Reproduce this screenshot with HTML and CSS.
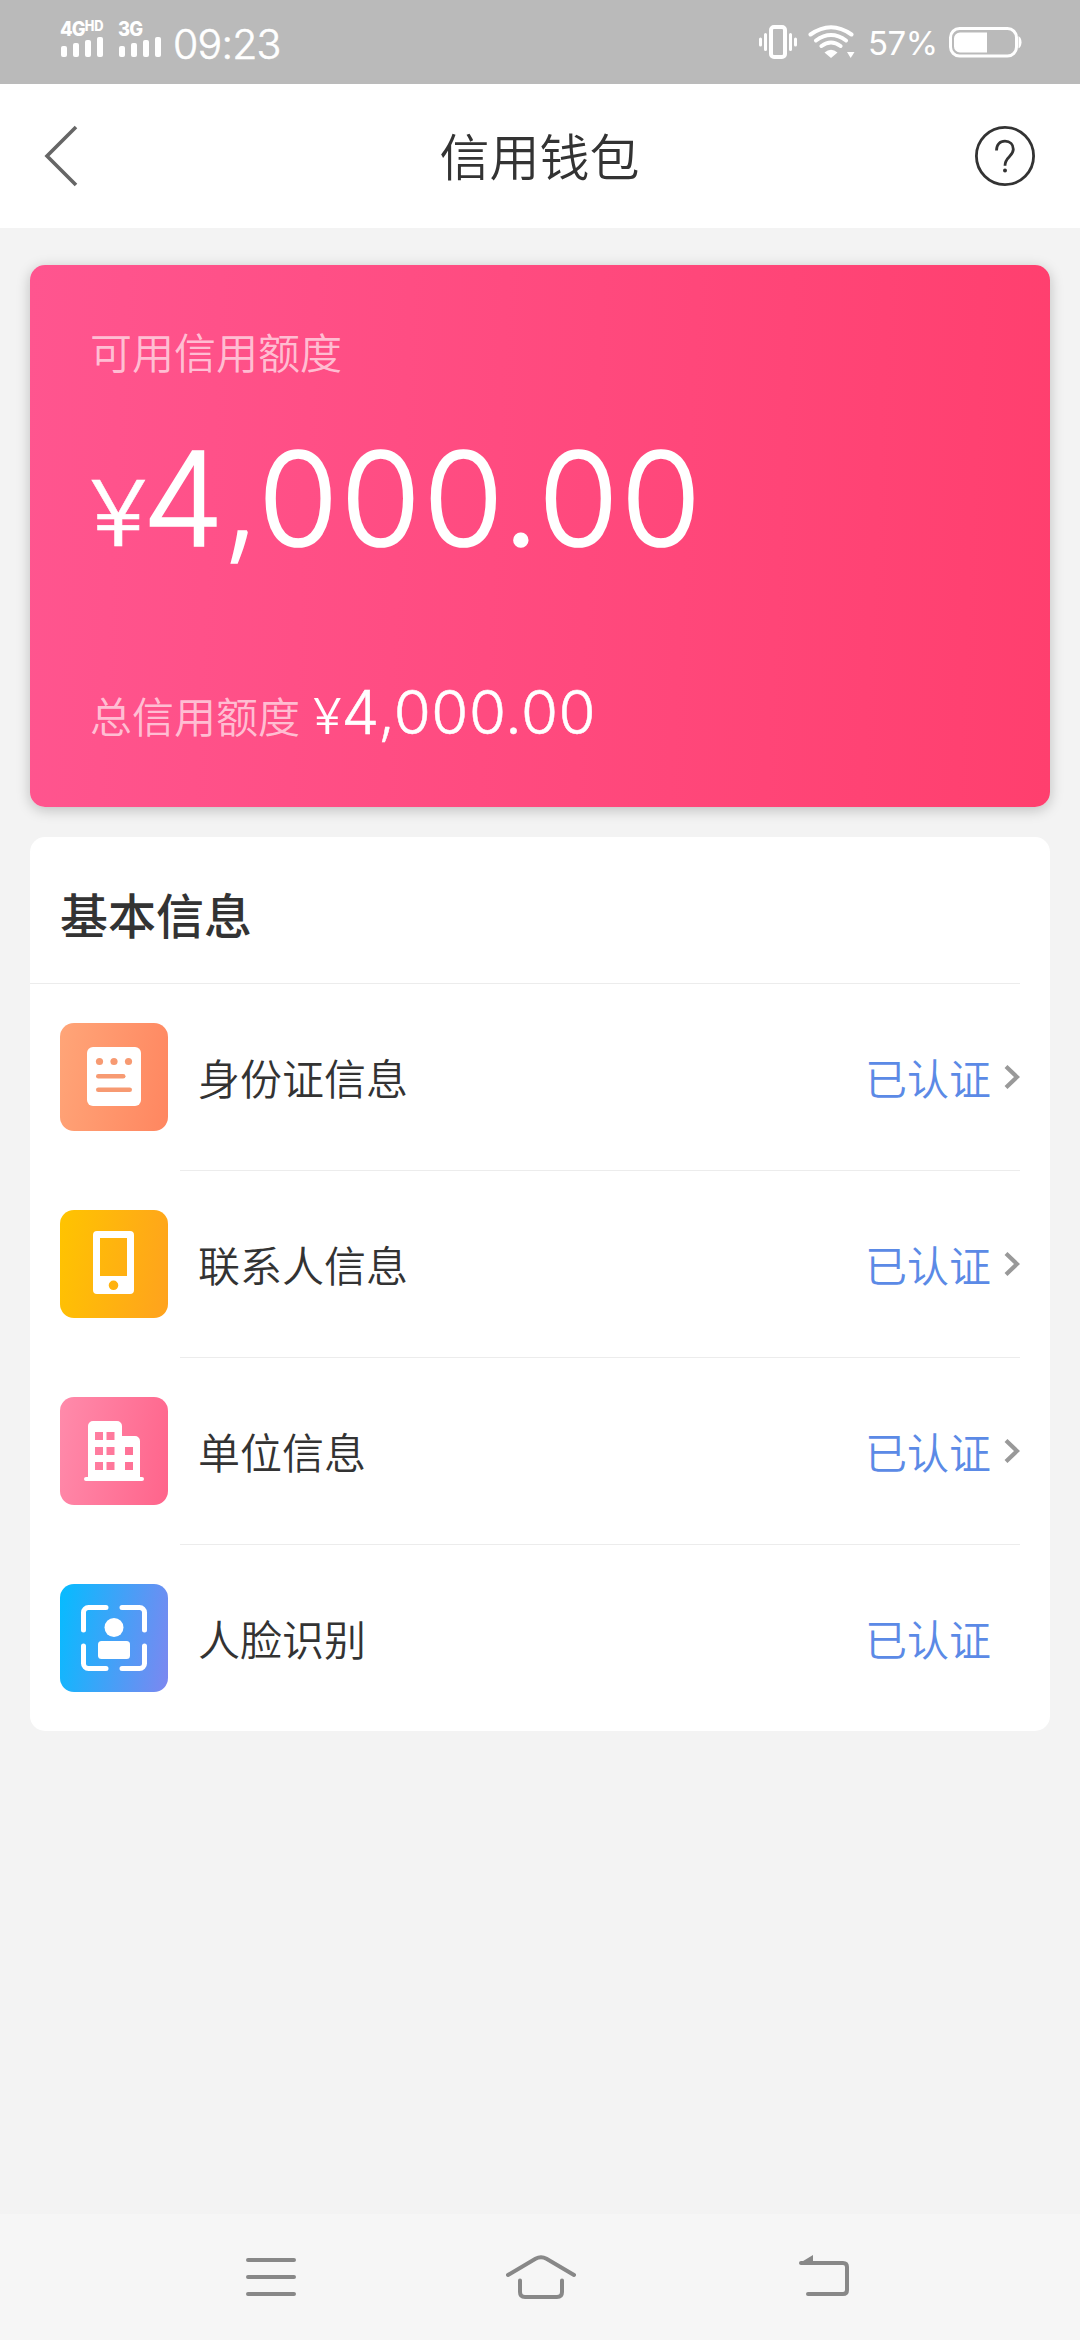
FILE: index.html
```html
<!DOCTYPE html>
<html lang="zh-CN">
<head>
<meta charset="utf-8">
<title>信用钱包</title>
<link rel="stylesheet" href="styles.css">
</head>
<body>
<div class="screen">
  <div class="status">
    <div class="signal">
      <div class="network">4G<span class="hd">HD</span></div>
      <svg class="bars" width="42" height="20" viewBox="0 0 42 20" fill="#fff"><rect y="9" width="6" height="11" rx="2"/><rect x="12" y="6" width="6" height="14" rx="2"/><rect x="24" y="3" width="6" height="17" rx="2"/><rect x="36" width="6" height="20" rx="2"/></svg>
    </div>
    <div class="signal second">
      <div class="network">3G</div>
      <svg class="bars" width="42" height="20" viewBox="0 0 42 20" fill="#fff"><rect y="9" width="6" height="11" rx="2"/><rect x="12" y="6" width="6" height="14" rx="2"/><rect x="24" y="3" width="6" height="17" rx="2"/><rect x="36" width="6" height="20" rx="2"/></svg>
    </div>
    <div class="time">09:23</div>
    <svg class="vibrate" width="38" height="34" viewBox="0 0 38 34" fill="none" stroke="#fff"><rect x="12" y="2" width="14" height="30" rx="3" stroke-width="4"/><path d="M1.5 14v6M6.500 9.500v15M31.500 9.500v15M36.500 14v6" stroke-width="3" stroke-linecap="round"/></svg>
    <svg class="wifi" width="48" height="34" viewBox="0 0 48 34" fill="none" stroke="#fff" stroke-width="4" stroke-linecap="round"><path d="M2.500 9.500Q23 -5 43.500 9.500M8 15.500Q23 4.500 38 15.500M13.500 21Q23 14 32.500 21"/><path d="M23 33l-6.500-5.500q6.500-5.500 13 0z" fill="#fff" stroke="none"/><path d="M39 27h7.500L42.700 33z" fill="#fff" stroke="none"/></svg>
    <div class="percent">57%</div>
    <svg class="battery" width="73" height="31" viewBox="0 0 73 31"><rect x="1.500" y="1.500" width="66" height="27.500" rx="9" fill="none" stroke="#fff" stroke-width="3"/><path d="M11 5.500h27v20H11a6 6 0 0 1-6-6v-8a6 6 0 0 1 6-6z" fill="#fff"/><path d="M69.500 9q3 2 3 6.300t-3 6.300z" fill="#fff"/></svg>
  </div>
  <header class="header">
    <svg class="back" width="34" height="62" viewBox="0 0 34 62" fill="none" stroke="#666" stroke-width="3.600"><path d="M32 2L3 31l29 29"/></svg>
    <h1 class="title">信用钱包</h1>
    <svg class="help" width="60" height="60" viewBox="0 0 60 60" fill="none" stroke="#333" stroke-width="2.800"><circle cx="30" cy="30" r="28.600"/><path d="M21.500 24.500c0-6 3.400-9.300 8.500-9.300s8.300 3.300 8.300 8c0 7.300-8.300 7.300-8.300 16.500"/><circle cx="30" cy="44.500" r="2" fill="#333" stroke="none"/></svg>
  </header>
  <main class="content">
    <section class="credit">
      <div class="caption">可用信用额度</div>
      <div class="amount"><span class="yen">¥</span><span class="figure">4<span class="comma">,</span>000.00</span></div>
      <div class="total"><span class="caption">总信用额度</span><span class="small-yen">¥</span><span class="small-figure">4<span class="comma">,</span>000.00</span></div>
    </section>
    <section class="info">
      <h2 class="info-title">基本信息</h2>
      <div class="row">
        <div class="tile orange"><svg width="108" height="108" viewBox="0 0 108 108"><rect x="27" y="24" width="54" height="59" rx="6" fill="#fff"/><g fill="#f79a72"><circle cx="39.500" cy="38.500" r="3.600"/><circle cx="54" cy="38.500" r="3.600"/><circle cx="68.500" cy="38.500" r="3.600"/><rect x="36" y="51" width="29.500" height="4.600" rx="2.300"/><rect x="36" y="64.500" width="36" height="4.600" rx="2.300"/></g></svg></div>
        <div class="row-body"><span class="name">身份证信息</span><span class="state">已认证</span><svg class="chevron" width="16" height="24" viewBox="0 0 16 24" fill="none" stroke="#999" stroke-width="4.200"><path d="M2 1.500L13 12l-11 10.500"/></svg></div>
      </div>
      <div class="row">
        <div class="tile yellow"><svg width="108" height="108" viewBox="0 0 108 108"><path fill="#fff" fill-rule="evenodd" d="M37 21h33a4 4 0 0 1 4 4v55a4 4 0 0 1-4 4H37a4 4 0 0 1-4-4V25a4 4 0 0 1 4-4zM40 28v38h27V28zM53.500 70.500a4.800 4.800 0 1 0 0 9.600a4.800 4.800 0 1 0 0-9.600z"/></svg></div>
        <div class="row-body"><span class="name">联系人信息</span><span class="state">已认证</span><svg class="chevron" width="16" height="24" viewBox="0 0 16 24" fill="none" stroke="#999" stroke-width="4.200"><path d="M2 1.500L13 12l-11 10.500"/></svg></div>
      </div>
      <div class="row">
        <div class="tile pink"><svg width="108" height="108" viewBox="0 0 108 108"><path fill="#fff" fill-rule="evenodd" d="M33 24h24a5 5 0 0 1 5 5v10h13a5 5 0 0 1 5 5v36h2a2 2 0 0 1 0 4H26a2 2 0 0 1 0-4h2V29a5 5 0 0 1 5-5zM35 35v8h8v-8zM46.500 35v8h8v-8zM35 50v8h8v-8zM46.500 50v8h8v-8zM65 50v8h8v-8zM35 65v8h8v-8zM46.500 65v8h8v-8zM65 65v8h8v-8z"/></svg></div>
        <div class="row-body"><span class="name">单位信息</span><span class="state">已认证</span><svg class="chevron" width="16" height="24" viewBox="0 0 16 24" fill="none" stroke="#999" stroke-width="4.200"><path d="M2 1.500L13 12l-11 10.500"/></svg></div>
      </div>
      <div class="row">
        <div class="tile blue"><svg width="108" height="108" viewBox="0 0 108 108" fill="#fff"><path d="M46 23.500H28.500a5 5 0 0 0-5 5V46M62 23.500h17.500a5 5 0 0 1 5 5V46M23.500 62v17.500a5 5 0 0 0 5 5H46M62 84.500h17.500a5 5 0 0 0 5-5V62" fill="none" stroke="#fff" stroke-width="5" stroke-linecap="round"/><circle cx="54" cy="43.500" r="9.500"/><rect x="38" y="57" width="32" height="18" rx="3.500"/></svg></div>
        <div class="row-body"><span class="name">人脸识别</span><span class="state">已认证</span></div>
      </div>
    </section>
  </main>
  <nav class="nav">
    <svg width="50" height="38" viewBox="0 0 50 38" stroke="#888" stroke-width="4" stroke-linecap="round"><path d="M2 2h46M2 19h46M2 36h46"/></svg>
    <svg class="home" width="70" height="44" viewBox="0 0 70 44" fill="none" stroke="#888" stroke-width="4" stroke-linecap="round"><path d="M2 20L29.500 3.700q5.500-3 11 0L68 20M14 25.500V37q0 5 5 5h32q5 0 5-5V25.500"/></svg>
    <svg class="return" width="52" height="42" viewBox="0 0 52 42" fill="none" stroke="#888" stroke-width="4" stroke-linecap="round"><path d="M3 8h42q4 0 4 4v23q0 4-4 4H10"/><path d="M1 8.500L15 0v8.500z" fill="#888" stroke="none"/></svg>
  </nav>
</div>
</body>
</html>
```
FILE: styles.css
```css
* { box-sizing: border-box; }
body {
  margin: 0;
  font-family: Inter, "Noto Sans CJK SC", sans-serif;
  color: #333;
}
svg { display: block; flex: none; }
.screen {
  width: 1080px;
  height: 2340px;
  display: flex;
  flex-direction: column;
  background: #f3f3f3;
}
.status {
  height: 84px;
  flex: none;
  display: flex;
  align-items: flex-start;
  background: #bababa;
  color: #fff;
  padding-left: 61px;
}
.signal { width: 42px; margin-top: 19px; }
.second { margin-left: 16px; }
.network {
  height: 18px;
  line-height: 21px;
  font-size: 20px;
  font-weight: 800;
  letter-spacing: -1px;
  white-space: nowrap;
  margin-left: -1px;
  transform: scaleX(.92);
  transform-origin: left;
}
.hd {
  font-size: 14px;
  letter-spacing: 0;
  vertical-align: 5px;
  line-height: 1;
}
.time {
  width: 112px;
  margin: 19px 0 0 12px;
  font-size: 41px;
  line-height: 50px;
  font-weight: 300;
  -webkit-text-stroke: .6px #fff;
  letter-spacing: -.8px;
  white-space: nowrap;
}
.vibrate { margin: 25px 0 0 474px; }
.wifi { margin: 25px 0 0 11px; }
.percent {
  width: 72px;
  margin: 23px 0 0 12px;
  font-size: 33px;
  line-height: 40px;
  letter-spacing: -.5px;
  white-space: nowrap;
}
.battery { margin: 27px 0 0 9px; }
.header {
  height: 144px;
  flex: none;
  display: flex;
  justify-content: space-between;
  align-items: center;
  padding: 0 45px 0 44px;
  background: #fff;
}
.back { margin-right: 26px; }
.title {
  margin: -4px 0 0;
  font-family: "Noto Sans CJK SC", sans-serif;
  font-size: 50px;
  line-height: 70px;
  font-weight: 350;
}
.content {
  flex: 1;
  display: flex;
  flex-direction: column;
  gap: 30px;
  padding: 37px 30px 0;
}
.credit {
  height: 542px;
  padding: 56px 60px 0;
  border-radius: 15px;
  background: linear-gradient(93deg, #ff558f, #ff3f6e);
  box-shadow: 0 3px 14px rgba(0, 0, 0, .22);
  color: #fff;
}
.caption {
  font-family: "Noto Sans CJK SC", sans-serif;
  font-size: 42px;
  line-height: 60px;
  font-weight: 350;
  color: rgba(255, 255, 255, .65);
}
.amount {
  height: 130px;
  margin-top: 50px;
  font-size: 130px;
  line-height: 130px;
  font-weight: 300;
  white-space: nowrap;
}
.yen {
  display: inline-block;
  font-size: 91px;
  line-height: 1;
  transform: scaleX(1.15);
  transform-origin: left;
  -webkit-text-stroke: .5px #fff;
}
.figure {
  margin-left: 3px;
  letter-spacing: 2.3px;
  -webkit-text-stroke: 1.6px #fff;
}
.comma { font-family: "Noto Sans", sans-serif; line-height: 1; }
.total {
  height: 60px;
  margin-top: 120px;
  display: flex;
  align-items: baseline;
  font-size: 60px;
  line-height: 60px;
  font-weight: 300;
  white-space: nowrap;
}
.total .caption { position: relative; top: -1px; }
.small-yen {
  font-size: 49px;
  margin-left: 13px;
  transform: scaleX(1.08);
  transform-origin: left;
}
.small-figure {
  margin-left: 2px;
  letter-spacing: .5px;
  -webkit-text-stroke: .5px #fff;
}
.info {
  height: 894px;
  border-radius: 15px;
  background: #fff;
}
.info-title {
  height: 147px;
  margin: 0 30px 0 0;
  padding: 41px 0 0 30px;
  border-bottom: 1px solid #ececec;
  font-family: "Noto Sans CJK SC", sans-serif;
  font-size: 48px;
  line-height: 70px;
  font-weight: 500;
}
.row {
  height: 187px;
  display: flex;
  padding: 0 30px;
}
.tile {
  width: 108px;
  height: 108px;
  flex: none;
  margin: 39px 12px 0 0;
  border-radius: 14px;
}
.orange { background: linear-gradient(100deg, #ffa578, #ff8660); }
.yellow { background: linear-gradient(100deg, #ffc400, #ffa21e); }
.pink { background: linear-gradient(100deg, #ff8bab, #ff648b); }
.blue { background: linear-gradient(100deg, #05bcff, #7d87f0); }
.row-body {
  flex: 1;
  display: flex;
  align-items: center;
  padding: 0 0 1px 18px;
  border-bottom: 1px solid #ececec;
  font-family: "Noto Sans CJK SC", sans-serif;
  font-size: 42px;
  line-height: 60px;
  font-weight: 350;
}
.row:last-child .row-body { border-bottom-color: transparent; padding-right: 29px; }
.name { flex: 1; }
.state { color: #5b8ae6; }
.chevron { margin: 0 0 0 13px; }
.nav {
  height: 126px;
  flex: none;
  display: flex;
  align-items: flex-start;
  padding: 44px 0 0 246px;
  background: #f6f6f6;
}
.home { margin: -3px 0 0 210px; }
.return { margin: -3px 0 0 222px; }
```
